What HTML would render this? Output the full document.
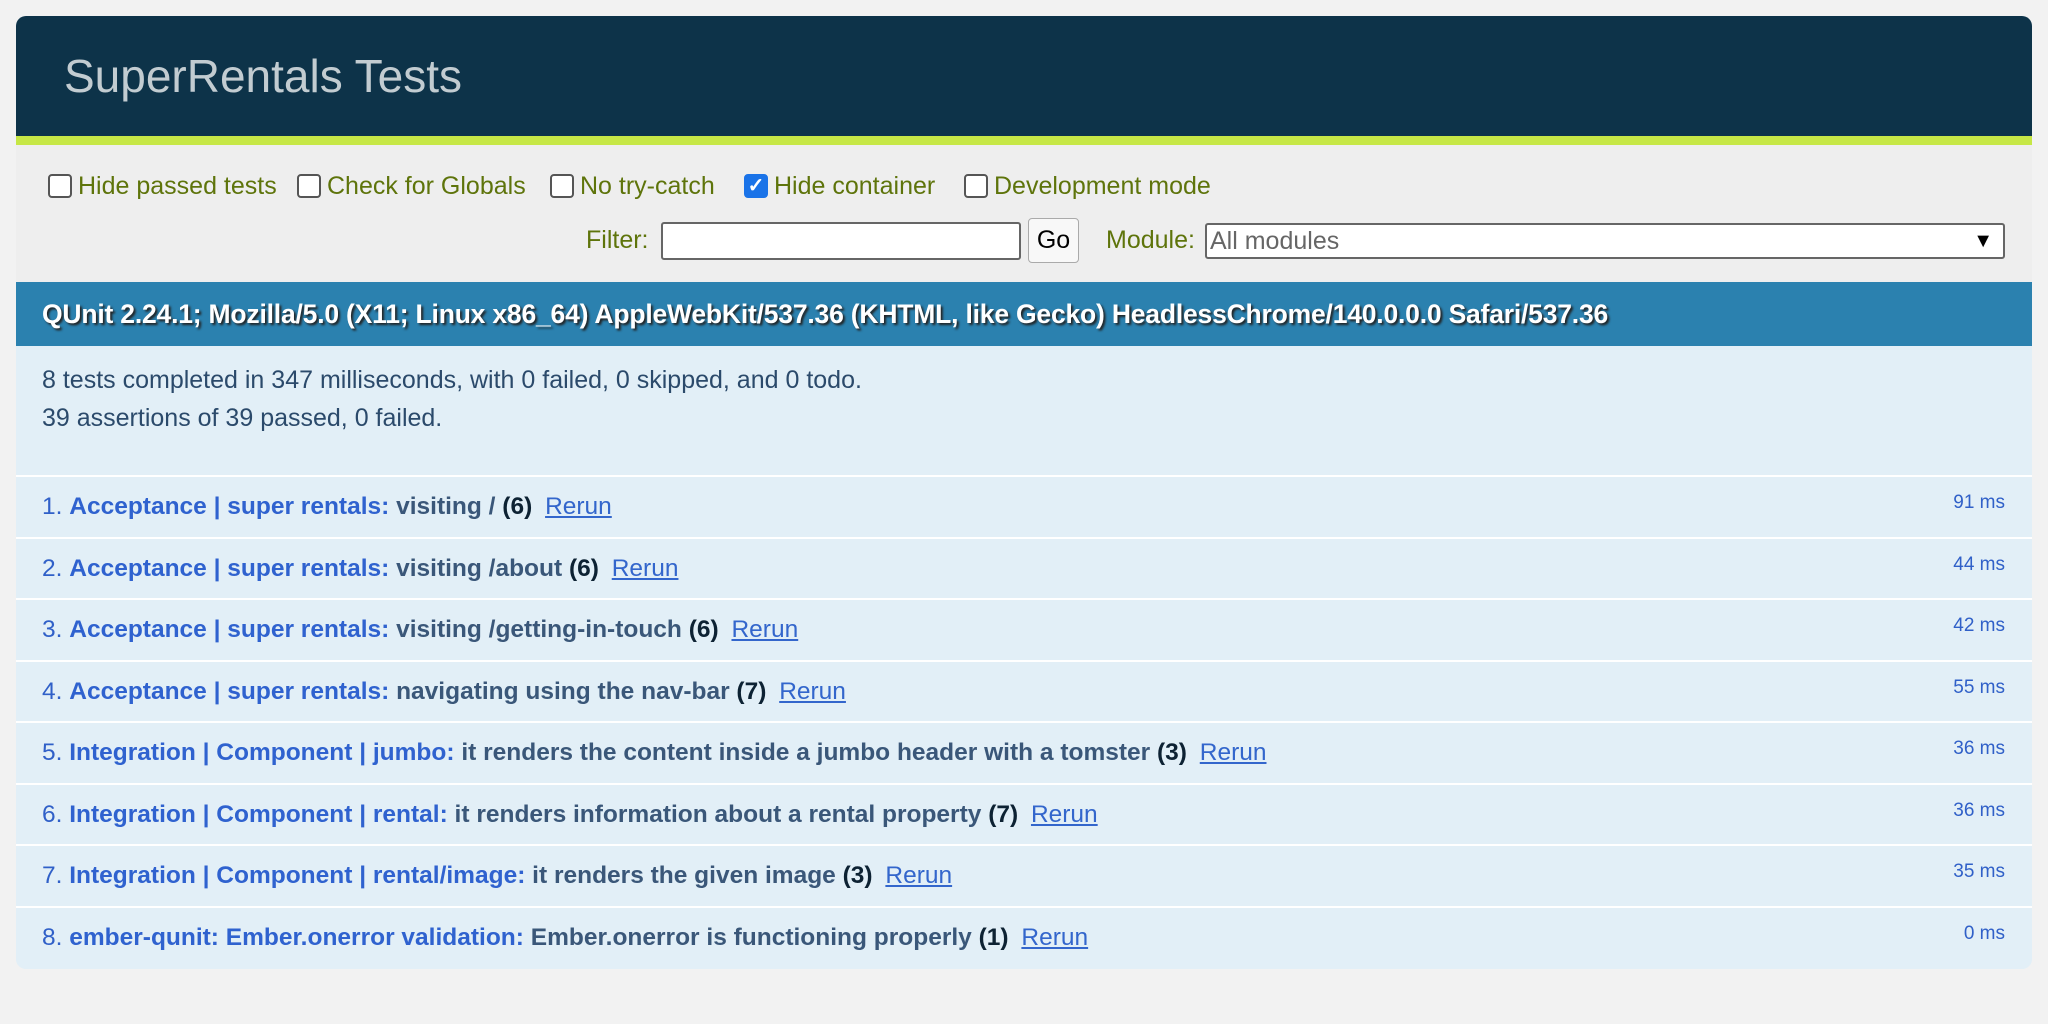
<!DOCTYPE html>
<html><head><meta charset="utf-8"><style>
*{box-sizing:border-box;margin:0;padding:0}
body{width:2048px;height:1024px;background:#f2f2f2;font-family:"Liberation Sans",sans-serif;position:relative;overflow:hidden}
#c{position:absolute;left:16px;top:16px;width:2016px;height:953px;border-radius:10px;overflow:hidden;background:#e2eff7}
#hd{position:absolute;left:0;top:0;width:100%;height:120px;background:#0d3349}
#hd h1{position:absolute;left:48px;top:33px;font-size:46px;font-weight:normal;color:#c2ccd1}
#gb{position:absolute;left:0;top:120px;width:100%;height:9px;background:#c6e746}
#tb{position:absolute;left:0;top:129px;width:100%;height:153px;background:#eee;color:#5e740b;font-size:25px}
.cb{position:absolute;top:26px;display:flex;align-items:center;height:30px}
.box{width:24px;height:24px;border:2px solid #555;border-radius:4px;background:#fff;margin-right:6px}
.box.on{background:#1a73e8;border-color:#1a73e8;color:#fff;font-size:20px;line-height:20px;text-align:center;font-weight:bold}
#ban{position:absolute;left:0;top:266px;width:100%;height:64px;background:#2b81af;color:#fff;font-weight:bold;font-size:26.5px;line-height:64px;padding-left:26px;text-shadow:2px 2px 2px #222;letter-spacing:-0.2px}
#sum{position:absolute;left:26px;top:345px;color:#2b4a6b;font-size:25px;line-height:38px}
.row{position:absolute;left:0;width:100%;height:59.5px;background:#e2eff7;border-top:2px solid #fff;font-size:24.5px;line-height:59px;padding-left:26px;color:#3060c8;white-space:nowrap}
.row b.m{color:#2f62cf}
.row b.t{color:#3a5779}
.row b.n{color:#0d2233}
.row a{color:#3366cc;text-decoration:underline;margin-left:6px}
.row .tm{position:absolute;right:27px;top:-4px;font-size:19px;color:#3060c8}
</style></head><body>
<div id="c">
<div id="hd"><h1>SuperRentals Tests</h1></div>
<div id="gb"></div>
<div id="tb">
<div class="cb" style="left:32px"><div class="box"></div>Hide passed tests</div>
<div class="cb" style="left:281px"><div class="box"></div>Check for Globals</div>
<div class="cb" style="left:534px"><div class="box"></div>No try-catch</div>
<div class="cb" style="left:728px"><div class="box on">✓</div>Hide container</div>
<div class="cb" style="left:948px"><div class="box"></div>Development mode</div>
<div style="position:absolute;left:570px;top:81px">Filter:</div>
<div style="position:absolute;left:645px;top:77px;width:360px;height:38px;background:#fff;border:2px solid #666;border-radius:3px"></div>
<div style="position:absolute;left:1012px;top:73px;width:51px;height:45px;background:#f8f8f8;border:1px solid #aaa;border-radius:4px;color:#000;text-align:center;line-height:43px">Go</div>
<div style="position:absolute;left:1090px;top:81px">Module:</div>
<div style="position:absolute;left:1189px;top:78px;width:800px;height:36px;background:#fff;border:2px solid #666;border-radius:3px;color:#666;padding-left:3px;line-height:32px">All modules<span style="position:absolute;right:10px;top:0;color:#000;font-size:20px">▼</span></div>
</div>
<div id="ban">QUnit 2.24.1; Mozilla/5.0 (X11; Linux x86_64) AppleWebKit/537.36 (KHTML, like Gecko) HeadlessChrome/140.0.0.0 Safari/537.36</div>
<div id="sum">8 tests completed in 347 milliseconds, with 0 failed, 0 skipped, and 0 todo.<br>39 assertions of 39 passed, 0 failed.</div>
<div class="row" style="top:459px">1. <b class="m">Acceptance | super rentals:</b> <b class="t">visiting /</b> <b class="n">(6)</b> <a>Rerun</a><span class="tm">91 ms</span></div>
<div class="row" style="top:520.5px">2. <b class="m">Acceptance | super rentals:</b> <b class="t">visiting /about</b> <b class="n">(6)</b> <a>Rerun</a><span class="tm">44 ms</span></div>
<div class="row" style="top:582px">3. <b class="m">Acceptance | super rentals:</b> <b class="t">visiting /getting-in-touch</b> <b class="n">(6)</b> <a>Rerun</a><span class="tm">42 ms</span></div>
<div class="row" style="top:643.5px">4. <b class="m">Acceptance | super rentals:</b> <b class="t">navigating using the nav-bar</b> <b class="n">(7)</b> <a>Rerun</a><span class="tm">55 ms</span></div>
<div class="row" style="top:705px">5. <b class="m">Integration | Component | jumbo:</b> <b class="t">it renders the content inside a jumbo header with a tomster</b> <b class="n">(3)</b> <a>Rerun</a><span class="tm">36 ms</span></div>
<div class="row" style="top:766.5px">6. <b class="m">Integration | Component | rental:</b> <b class="t">it renders information about a rental property</b> <b class="n">(7)</b> <a>Rerun</a><span class="tm">36 ms</span></div>
<div class="row" style="top:828px">7. <b class="m">Integration | Component | rental/image:</b> <b class="t">it renders the given image</b> <b class="n">(3)</b> <a>Rerun</a><span class="tm">35 ms</span></div>
<div class="row" style="top:889.5px">8. <b class="m">ember-qunit: Ember.onerror validation:</b> <b class="t">Ember.onerror is functioning properly</b> <b class="n">(1)</b> <a>Rerun</a><span class="tm">0 ms</span></div>
</div>
</body></html>
